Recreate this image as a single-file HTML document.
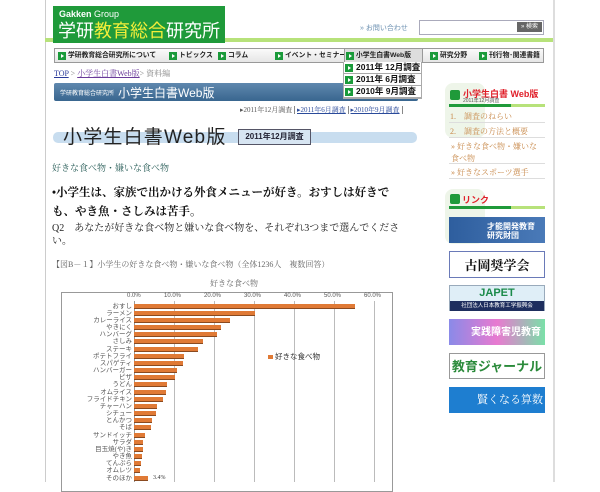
<!DOCTYPE html>
<html><head><meta charset="utf-8"><style>
*{margin:0;padding:0;box-sizing:border-box}
body{width:600px;height:482px;background:#fff;position:relative;overflow:hidden;font-family:"Liberation Serif","Noto Serif CJK SC",serif;color:#333}
.a{position:absolute;white-space:nowrap}
.sans{font-family:"Liberation Sans","Noto Sans CJK JP",sans-serif}
.nav span{position:absolute;top:0;height:14px;line-height:13px;font-size:6.8px;font-family:"Liberation Sans","Noto Sans CJK JP",sans-serif;font-weight:bold;color:#222;padding-left:11px}
.gi{display:inline-block;width:8px;height:8px;background:#1a9a3a;position:absolute;left:1px;top:3px}
.gi:after{content:"";position:absolute;left:3px;top:2px;border-left:3px solid #fff;border-top:2px solid transparent;border-bottom:2px solid transparent}
.dd div{height:12px;border-bottom:1px solid #aaa;position:relative;padding-left:12px;font-size:8.5px;line-height:11px;font-weight:bold;font-family:"Liberation Sans","Noto Sans CJK JP",sans-serif;color:#111}
.dd .gi{top:2px}
.bar{position:absolute;height:5px;background:#e07a36;border-bottom:1px solid #8a4a20;left:134px}
.lbl{position:absolute;right:468px;font-size:6.5px;color:#555;font-family:"Liberation Sans","Noto Sans CJK JP",sans-serif;line-height:7px}
.side{font-size:8px;color:#c8894a}
</style></head><body>
<div class="a" style="left:45px;top:0;width:1px;height:482px;background:#ccc"></div>
<div class="a" style="left:553px;top:0;width:2px;height:482px;background:#ddd"></div>
<!-- header -->
<div class="a" style="left:45px;top:38px;width:508px;height:4px;background:#b7e27a"></div>
<div class="a sans" style="left:53px;top:6px;width:172px;height:37px;background:#1f9a3a;color:#fff">
 <div class="a" style="left:6px;top:3px;font-size:9px;font-weight:bold">Gakken <span style="font-weight:normal">Group</span></div>
 <div class="a" style="left:5px;top:14px;font-size:18px;line-height:22px">学研<span style="color:#f2ee3a">教育総合</span>研究所</div>
</div>
<div class="a sans" style="left:360px;top:23px;font-size:7px;color:#6a8fb0">» お問い合わせ</div>
<div class="a" style="left:419px;top:20px;width:125px;height:15px;border:1px solid #aab"></div>
<div class="a sans" style="left:517px;top:22px;width:25px;height:10px;background:#666;color:#fff;font-size:6px;text-align:center;line-height:10px">» 検索</div>
<!-- nav -->
<div class="a nav" style="left:54px;top:48px;width:490px;height:15px;background:linear-gradient(#fafafa,#e6e6e6);border:1px solid #999">
 <span style="left:2px"><i class="gi"></i>学研教育総合研究所について</span>
 <span style="left:113px"><i class="gi"></i>トピックス</span>
 <span style="left:162px"><i class="gi"></i>コラム</span>
 <span style="left:219px"><i class="gi"></i>イベント・セミナー</span>
 <span style="left:289px;width:79px;background:#ddd;height:14px;border-left:1px solid #999;border-right:1px solid #999"><i class="gi"></i>小学生白書Web版</span>
 <span style="left:374px"><i class="gi"></i>研究分野</span>
 <span style="left:423px"><i class="gi"></i>刊行物･関連書籍</span>
</div>
<div class="a dd" style="left:343px;top:62px;width:79px;background:#fff;border:1px solid #aaa;border-top:none;z-index:3">
 <div><i class="gi"></i>2011年 12月調査</div><div><i class="gi"></i>2011年 6月調査</div><div><i class="gi"></i>2010年 9月調査</div>
</div>
<div class="a" style="left:54px;top:68px;font-size:8px;color:#888"><span style="color:#2a3a9a;text-decoration:underline">TOP</span> &gt; <span style="color:#6a3a9a;text-decoration:underline">小学生白書Web版</span>&gt; 資料編</div>
<div class="a sans" style="left:54px;top:83px;width:364px;height:18px;background:linear-gradient(#5f88ae,#39668f);border-radius:2px;color:#fff">
 <span class="a" style="left:6px;top:5px;font-size:6px">学研教育総合研究所</span>
 <span class="a" style="left:64px;top:1px;font-size:12px">小学生白書Web版</span>
</div>
<div class="a" style="left:240px;top:105px;font-size:7px;color:#555">▸2011年12月調査 <span style="border-left:1px solid #888;padding-left:2px;color:#2a4a9a;text-decoration:underline">▸2011年6月調査</span> <span style="border-left:1px solid #888;padding-left:2px;color:#2a4a9a;text-decoration:underline">▸2010年9月調査</span><span style="border-left:1px solid #888;margin-left:2px"></span></div>
<!-- title -->
<div class="a" style="left:53px;top:132px;width:364px;height:11px;background:#c8ddef;border-radius:5px"></div>
<div class="a sans" style="left:63px;top:122px;font-size:19px;color:#222;letter-spacing:1.2px">小学生白書Web版</div>
<div class="a sans" style="left:238px;top:129px;width:73px;height:16px;border:1px solid #556;background:#d7e5f2;font-size:8px;font-weight:bold;line-height:14px;text-align:center;color:#223">2011年12月調査</div>
<div class="a" style="left:52px;top:161px;font-size:9px;color:#2b5f5a">好きな食べ物・嫌いな食べ物</div>
<div class="a" style="left:52px;top:184px;font-size:11.5px;font-weight:bold;color:#111;line-height:19px;white-space:normal;width:352px">•小学生は、家族で出かける外食メニューが好き。おすしは好きでも、やき魚・さしみは苦手。</div>
<div class="a" style="left:52px;top:222px;font-size:10px;color:#222;line-height:13px;white-space:normal;width:366px">Q2　あなたが好きな食べ物と嫌いな食べ物を、それぞれ3つまで選んでくださ<br>い。</div>
<div class="a" style="left:52px;top:259px;font-size:8px;color:#666">【図B－１】小学生の好きな食べ物・嫌いな食べ物（全体1236人　複数回答）</div>
<div class="a" style="left:210px;top:278px;font-size:8px;color:#666">好きな食べ物</div>
<!-- chart -->
<div class="a" style="left:61px;top:292px;width:332px;height:200px;border:1px solid #999"></div>
<div class="a" style="left:134px;top:301px;width:1px;height:181px;background:#999"></div>
<div class="a" style="left:174px;top:301px;width:1px;height:181px;background:#bbb"></div>
<div class="a" style="left:214px;top:301px;width:1px;height:181px;background:#bbb"></div>
<div class="a" style="left:254px;top:301px;width:1px;height:181px;background:#bbb"></div>
<div class="a" style="left:294px;top:301px;width:1px;height:181px;background:#bbb"></div>
<div class="a" style="left:334px;top:301px;width:1px;height:181px;background:#bbb"></div>
<div class="a" style="left:374px;top:301px;width:1px;height:181px;background:#bbb"></div>
<div class="a" style="left:127px;top:293px;font-size:6px;color:#555;width:260px;font-family:'Liberation Sans',sans-serif">
<span class="a" style="left:0">0.0%</span><span class="a" style="left:37px">10.0%</span><span class="a" style="left:77px">20.0%</span><span class="a" style="left:117px">30.0%</span><span class="a" style="left:157px">40.0%</span><span class="a" style="left:197px">50.0%</span><span class="a" style="left:237px">60.0%</span></div>
<div id="ch"></div>
<div class="a sans" style="left:268px;top:351px;font-size:7.5px;color:#333"><span style="display:inline-block;width:5px;height:4px;background:#e07a36;margin-right:2px"></span>好きな食べ物</div>
<div class="a" style="left:153px;top:475px;font-size:6px;color:#333">3.4%</div>
<!-- sidebar -->
<div class="a" style="left:445px;top:83px;width:40px;height:55px;background:#eaf3e4;border-radius:8px;opacity:.8"></div>
<div class="a" style="left:450px;top:90px;width:10px;height:10px;background:#1f9a3a;border-radius:2px"></div>
<div class="a sans" style="left:463px;top:87px;font-size:9px;font-weight:bold;color:#e0202a">小学生白書 Web版</div>
<div class="a sans" style="left:463px;top:97px;font-size:5px;color:#555">2011年12月調査</div>
<div class="a" style="left:449px;top:104px;width:96px;height:3px;background:#b7e27a"></div>
<div class="a" style="left:449px;top:104px;width:62px;height:3px;background:#1f9a3a"></div>
<div class="a side" style="left:450px;top:111px">1.　調査のねらい</div>
<div class="a" style="left:449px;top:122px;width:96px;height:1px;background:#ddd"></div>
<div class="a side" style="left:450px;top:126px">2.　調査の方法と概要</div>
<div class="a" style="left:449px;top:137px;width:96px;height:1px;background:#ddd"></div>
<div class="a side" style="left:451px;top:141px;line-height:12px;white-space:normal;width:92px">» 好きな食べ物・嫌いな食べ物</div>
<div class="a" style="left:449px;top:163px;width:96px;height:1px;background:#ddd"></div>
<div class="a side" style="left:451px;top:167px">» 好きなスポーツ選手</div>
<div class="a" style="left:449px;top:178px;width:96px;height:1px;background:#ddd"></div>
<div class="a" style="left:445px;top:189px;width:40px;height:55px;background:#eaf3e4;border-radius:8px;opacity:.8"></div>
<div class="a" style="left:450px;top:194px;width:10px;height:10px;background:#1f9a3a;border-radius:2px"></div>
<div class="a sans" style="left:462px;top:193px;font-size:9px;font-weight:bold;color:#e0202a">リンク</div>
<div class="a" style="left:449px;top:206px;width:96px;height:3px;background:#b7e27a"></div>
<div class="a" style="left:449px;top:206px;width:62px;height:3px;background:#1f9a3a"></div>
<div class="a sans" style="left:449px;top:217px;width:96px;height:26px;background:linear-gradient(90deg,#2e5e9e,#4a7ab8);color:#fff;font-size:8px;font-weight:bold;line-height:9px;padding:5px 0 0 38px">才能開発教育<br>研究財団</div>
<div class="a" style="left:449px;top:251px;width:96px;height:27px;background:#fff;border:1px solid #6a7ab8;font-size:13px;font-weight:bold;text-align:center;line-height:28px;color:#111">古岡奨学会</div>
<div class="a sans" style="left:449px;top:285px;width:96px;height:26px;background:#dfeef7;border:1px solid #9ab"><div style="text-align:center;font-size:11px;font-weight:bold;color:#1a8a4a;line-height:15px">JAPET</div><div style="background:#1e2e5e;color:#fff;font-size:5.5px;height:10px;line-height:10px;text-align:center">社団法人日本教育工学振興会</div></div>
<div class="a sans" style="left:449px;top:319px;width:96px;height:26px;background:linear-gradient(90deg,#8a8ae8,#e87ad0,#7ae0a8);color:#fff;font-size:10px;font-weight:bold;line-height:28px;padding-left:22px">実践障害児教育</div>
<div class="a sans" style="left:449px;top:353px;width:96px;height:26px;background:#fff;border:1px solid #999;color:#2a8a3a;font-size:13px;font-weight:bold;line-height:26px;text-align:center">教育ジャーナル</div>
<div class="a" style="left:449px;top:387px;width:96px;height:26px;background:#1e7ed0;color:#fff;font-size:11px;line-height:27px;padding-left:28px">賢くなる算数</div>
<script>
var d=[["おすし",55],["ラーメン",30],["カレーライス",24],["やきにく",21.6],["ハンバーグ",20.6],["さしみ",17.2],["ステーキ",15.8],["ポテトフライ",12.4],["スパゲティ",12.3],["ハンバーガー",10.6],["ピザ",10.2],["うどん",8.3],["オムライス",8],["フライドチキン",7.3],["チャーハン",5.8],["シチュー",5.5],["とんかつ",4.4],["そば",4.3],["サンドイッチ",2.8],["サラダ",2.3],["目玉焼(や)き",2.3],["やき魚",1.9],["てんぷら",1.8],["オムレツ",1.5],["そのほか",3.4]];
var h="";d.forEach(function(r,i){var y=303.5+i*7.17;h+='<div class="bar" style="top:'+y+'px;width:'+(r[1]*4.02)+'px"></div><div class="lbl" style="top:'+(y-1)+'px">'+r[0]+'</div>';});
document.getElementById("ch").innerHTML=h;
</script>
</body></html>
